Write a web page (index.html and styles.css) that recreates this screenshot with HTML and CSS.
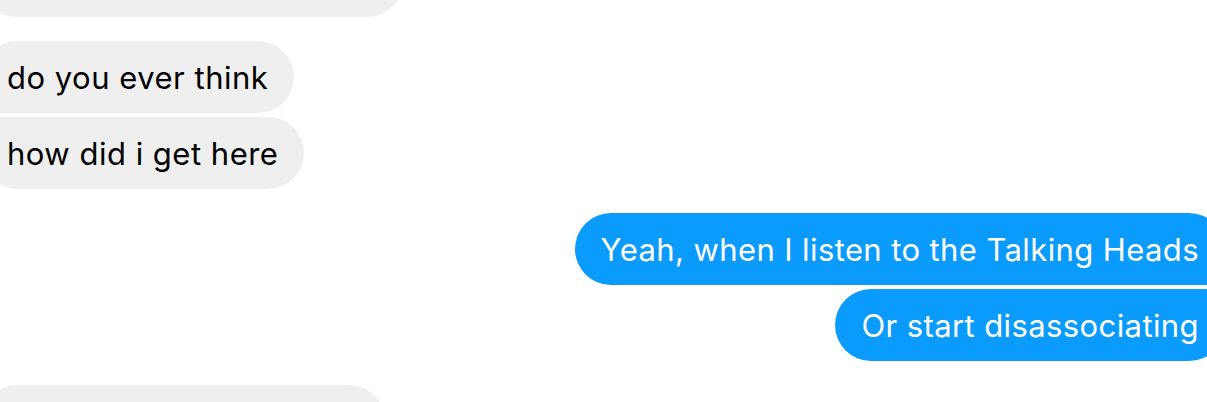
FILE: index.html
```html
<!DOCTYPE html>
<html lang="en">
<head>
  <meta charset="UTF-8">
  <title>Messages</title>
  <link rel="stylesheet" href="styles.css">
</head>
<body>

  <div id="thread">
    <div class="row them">
      <div class="bubble gray wide-top"></div>
    </div>

    <div class="group">
      <div class="row them">
        <div class="bubble gray first">do you ever think</div>
      </div>
      <div class="row them">
        <div class="bubble gray last">how did i get here</div>
      </div>
    </div>

    <div class="group">
      <div class="row me">
        <div class="bubble blue first">Yeah, when I listen to the Talking Heads</div>
      </div>
      <div class="row me">
        <div class="bubble blue last">Or start disassociating</div>
      </div>
    </div>

    <div class="row them">
      <div class="bubble gray wide-bottom"></div>
    </div>
  </div>

</body>
</html>
```

FILE: styles.css
```css
* {
  margin: 0;
  padding: 0;
  box-sizing: border-box;
}

body {
  font-family: Inter, 'Liberation Sans', sans-serif;
  background-color: #fff;
  color: #000;
  width: 1207px;
  height: 402px;
  overflow: hidden;
}

#thread {
  display: flex;
  flex-direction: column;
  gap: 24px;
  margin-top: -55px;
  margin-left: -19px;
  margin-right: -18px;
}

.group {
  display: flex;
  flex-direction: column;
  gap: 4px;
}

.row {
  display: flex;
}

.row.them {
  justify-content: flex-start;
}

.row.me {
  justify-content: flex-end;
}

.bubble {
  height: 72px;
  padding: 0 26px;
  border-radius: 36px;
  display: flex;
  align-items: center;
  font-size: 31px;
  letter-spacing: 0.5px;
  white-space: nowrap;
}

.bubble.gray {
  background-color: #efefef;
  color: #000;
}

.bubble.blue {
  background-color: #0a9bfc;
  color: #fff;
  letter-spacing: 0.4px;
}

.gray.first { border-bottom-left-radius: 10px; }
.gray.last { border-top-left-radius: 10px; }
.blue.first { border-bottom-right-radius: 10px; }
.blue.last { border-top-right-radius: 10px; }

.wide-top {
  width: 422px;
}

.wide-bottom {
  width: 404px;
}
```
